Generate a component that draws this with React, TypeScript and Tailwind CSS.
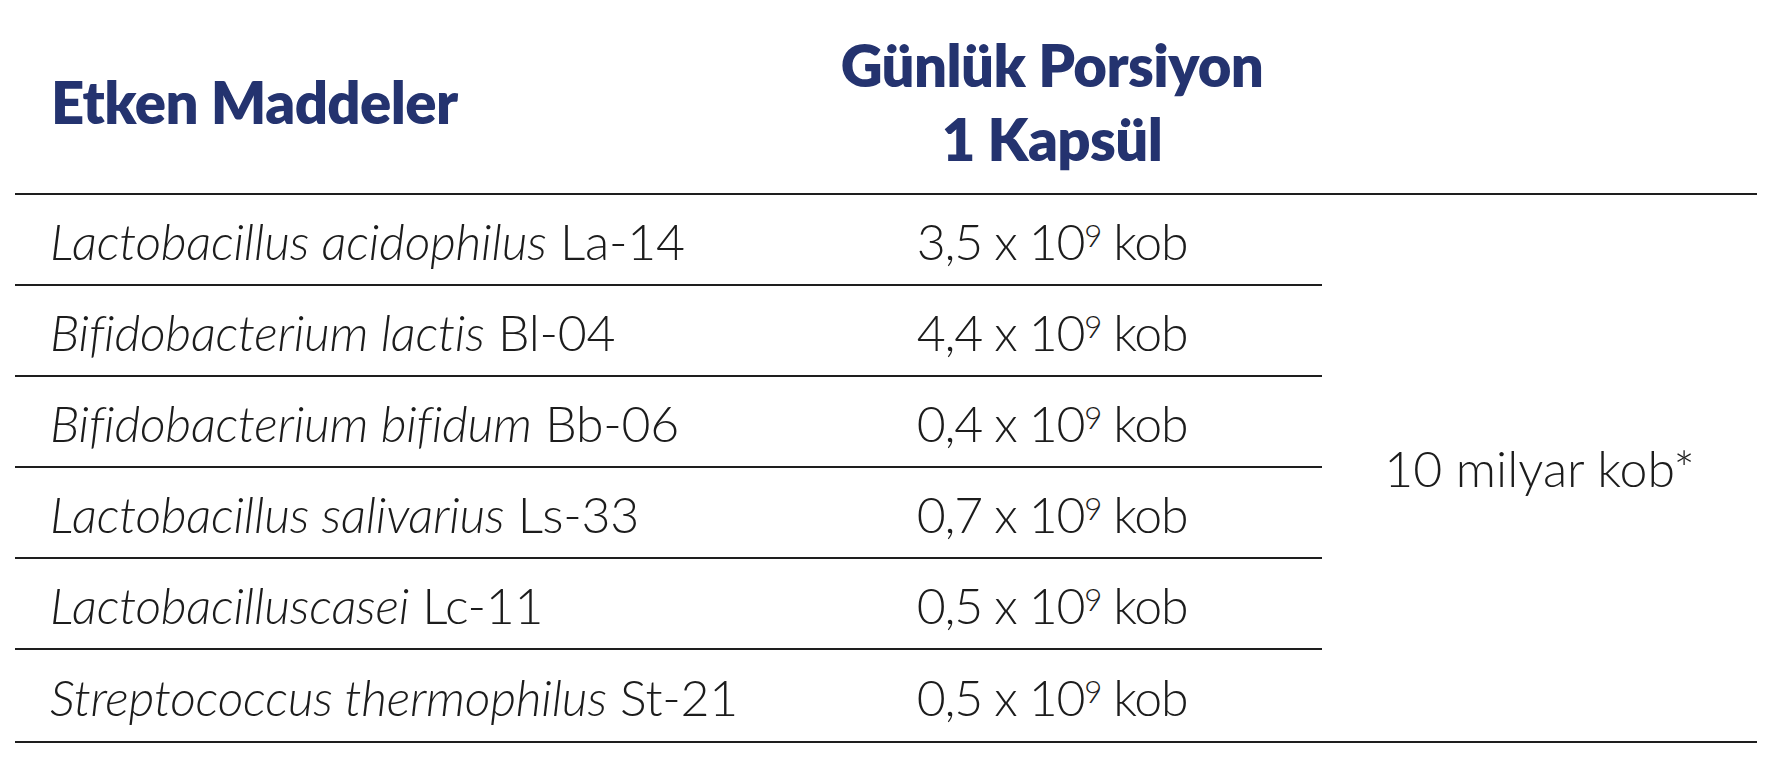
import React from "react";

const rows = [
  { name: "Lactobacillus acidophilus", code: "La-14", amount: "3,5" },
  { name: "Bifidobacterium lactis", code: "Bl-04", amount: "4,4" },
  { name: "Bifidobacterium bifidum", code: "Bb-06", amount: "0,4" },
  { name: "Lactobacillus salivarius", code: "Ls-33", amount: "0,7" },
  { name: "Lactobacilluscasei", code: "Lc-11", amount: "0,5" },
  { name: "Streptococcus thermophilus", code: "St-21", amount: "0,5" },
];

export default function App() {
  return (
    <div className="h-[760px] w-[1770px] bg-white pl-[15px] pr-[13px] font-['Lato',sans-serif] text-[#1c1c1c]">
      {/* header */}
      <div className="flex h-[193px] items-center pt-[10px] text-[#24336f] font-extrabold">
        <div className="w-[767px] pl-[36px] text-[58px] leading-none tracking-[-0.01em]">Etken Maddeler</div>
        <div className="w-[540px] text-center text-[58px] leading-[74px] tracking-[-0.01em]">
          Günlük Porsiyon
          <br />
          1 Kapsül
        </div>
        <div className="flex-1" />
      </div>

      <div className="flex border-y-2 border-[#1e1e1e]">
        <div className="w-[1307px]">
          {rows.map((r, i) => (
            <div
              key={i}
              className={
                "flex h-[91px] items-center pt-[4px] text-[50px] font-light " +
                (i < rows.length - 1 ? "border-b-2 border-[#1e1e1e]" : "")
              }
            >
              <div className="w-[767px] pl-[35px] whitespace-nowrap tracking-[-0.005em]">
                <span className="italic">{r.name}</span> {r.code}
              </div>
              <div className="w-[540px] text-center whitespace-nowrap tracking-[-0.025em]">
                {r.amount} x 10<span className="align-[13px] text-[31px] leading-none">9</span> kob
              </div>
            </div>
          ))}
        </div>
        <div className="flex flex-1 items-center justify-center text-[50px] font-light">
          10 milyar kob*
        </div>
      </div>
    </div>
  );
}
